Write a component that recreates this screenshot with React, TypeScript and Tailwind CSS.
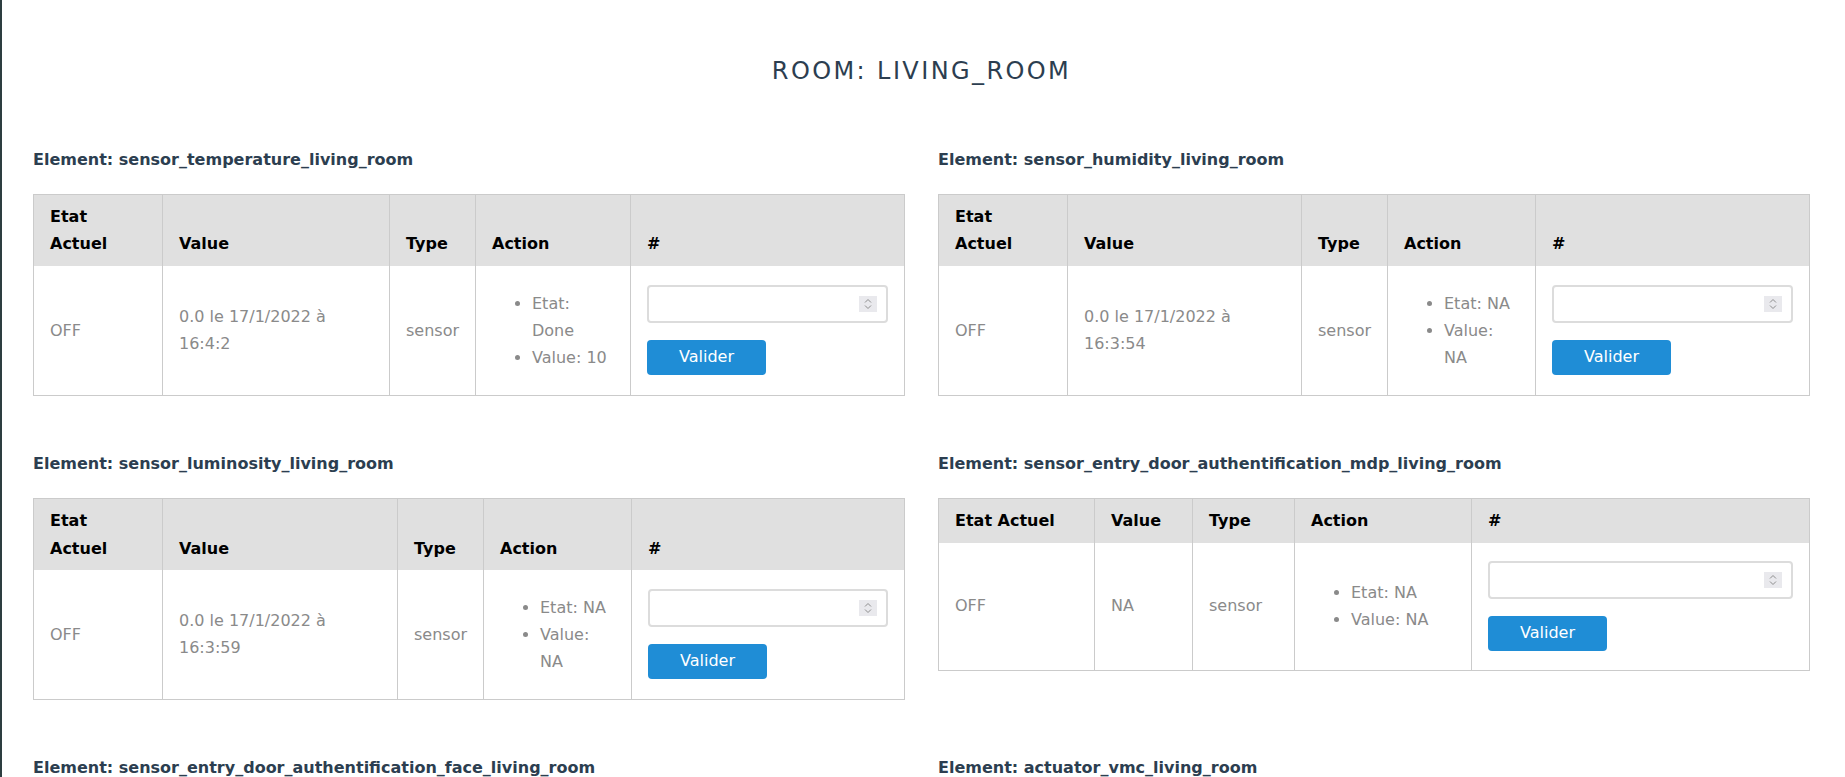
import React from "react";

type Item = {
  name: string;
  etat: string;
  value: string;
  type: string;
  action: string[];
  cols: string[];
};

const items: Item[] = [
  {
    name: "sensor_temperature_living_room",
    etat: "OFF",
    value: "0.0 le 17/1/2022 à 16:4:2",
    type: "sensor",
    action: ["Etat: Done", "Value: 10"],
    cols: ["w-[129px]", "w-[227px]", "w-[86px]", "w-[155px]"],
  },
  {
    name: "sensor_humidity_living_room",
    etat: "OFF",
    value: "0.0 le 17/1/2022 à 16:3:54",
    type: "sensor",
    action: ["Etat: NA", "Value: NA"],
    cols: ["w-[129px]", "w-[234px]", "w-[86px]", "w-[148px]"],
  },
  {
    name: "sensor_luminosity_living_room",
    etat: "OFF",
    value: "0.0 le 17/1/2022 à 16:3:59",
    type: "sensor",
    action: ["Etat: NA", "Value: NA"],
    cols: ["w-[129px]", "w-[235px]", "w-[86px]", "w-[148px]"],
  },
  {
    name: "sensor_entry_door_authentification_mdp_living_room",
    etat: "OFF",
    value: "NA",
    type: "sensor",
    action: ["Etat: NA", "Value: NA"],
    cols: ["w-[156px]", "w-[98px]", "w-[102px]", "w-[177px]"],
  },
  {
    name: "sensor_entry_door_authentification_face_living_room",
    etat: "OFF",
    value: "NA",
    type: "sensor",
    action: ["Etat: NA", "Value: NA"],
    cols: ["w-[156px]", "w-[98px]", "w-[102px]", "w-[177px]"],
  },
  {
    name: "actuator_vmc_living_room",
    etat: "OFF",
    value: "NA",
    type: "actuator",
    action: ["Etat: NA", "Value: NA"],
    cols: ["w-[156px]", "w-[98px]", "w-[110px]", "w-[177px]"],
  },
];

function Spinner() {
  return (
    <span className="pointer-events-none absolute right-[11px] top-1/2 -translate-y-1/2 flex h-[16px] w-[18px] items-center justify-center bg-[#e9e9ed]">
      <svg width="18" height="16" viewBox="0 0 18 16" fill="none">
        <path d="M6 6.5 L9 3.5 L12 6.5" stroke="#8d8d8d" strokeWidth="1" />
        <path d="M6 9.5 L9 12.5 L12 9.5" stroke="#8d8d8d" strokeWidth="1" />
      </svg>
    </span>
  );
}

function ElementTable({ item }: { item: Item }) {
  const th = "border-l border-[#cbcbcb] px-4 py-2 text-left align-bottom font-bold text-black";
  const td = "border-l border-[#cbcbcb] px-4 py-2 align-middle text-[#8a8a8a]";
  return (
    <section>
      <h2 className="text-[16px] font-bold leading-[1.7] text-[#2c3e50]">
        Element: {item.name}
      </h2>
      <table className="mt-[21px] w-full table-fixed border-collapse border border-[#cbcbcb]">
        <colgroup>
          {item.cols.map((c, i) => (
            <col key={i} className={c} />
          ))}
          <col />
        </colgroup>
        <thead className="bg-[#e0e0e0]">
          <tr>
            <th className={th}>Etat Actuel</th>
            <th className={th}>Value</th>
            <th className={th}>Type</th>
            <th className={th}>Action</th>
            <th className={th}>#</th>
          </tr>
        </thead>
        <tbody>
          <tr>
            <td className={td}>{item.etat}</td>
            <td className={td}>{item.value}</td>
            <td className={td}>{item.type}</td>
            <td className={td}>
              <ul className="my-4 list-disc pl-10">
                {item.action.map((a) => (
                  <li key={a}>{a}</li>
                ))}
              </ul>
            </td>
            <td className={td}>
              <div className="flex flex-col items-start">
                <div className="relative mt-[10px] h-[38px] w-full">
                  <input
                    type="text"
                    inputMode="numeric"
                    className="h-full w-full rounded-[4px] border-2 border-[#dcdcdc] bg-white px-2 text-[16px] text-[#555] outline-none"
                  />
                  <Spinner />
                </div>
                <button
                  type="button"
                  className="mt-[17px] mb-[11px] flex h-[35px] items-center justify-center rounded-[4px] bg-[#1f8dd6] px-8 text-[16px] leading-normal text-white"
                >
                  Valider
                </button>
              </div>
            </td>
          </tr>
        </tbody>
      </table>
    </section>
  );
}

export default function App() {
  return (
    <div className="min-h-screen border-l-2 border-[#2d3e40] bg-white pl-[31px] pr-[35px] pt-[53px] pb-10 font-['DejaVu_Sans',sans-serif] text-[16px] leading-[1.7]">
      <h1 className="text-center text-[24px] font-normal leading-[36px] tracking-[0.1em] text-[#2c3e50]">
        ROOM: LIVING_ROOM
      </h1>
      <div className="mt-[57px] grid grid-cols-2 items-start gap-x-[33px] gap-y-[54px]">
        {items.map((item) => (
          <ElementTable key={item.name} item={item} />
        ))}
      </div>
    </div>
  );
}
